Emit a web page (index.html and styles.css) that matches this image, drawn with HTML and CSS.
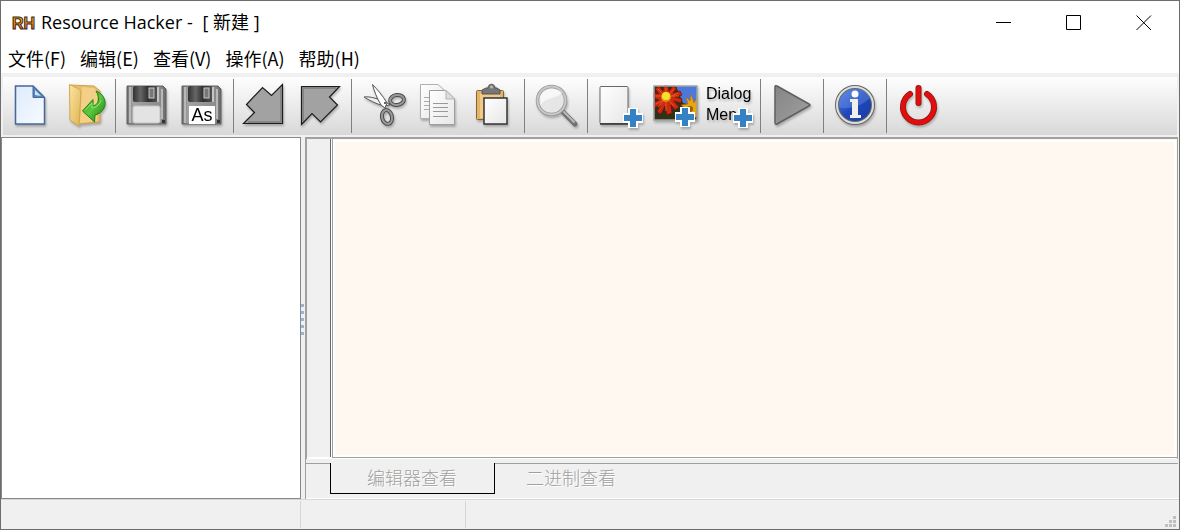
FILE: index.html
```html
<!DOCTYPE html>
<html lang="zh-CN">

<head>
    <meta charset="UTF-8">
    <meta name="viewport" content="width=device-width, initial-scale=1.0">
    <title>Resource Hacker</title>
    <link rel="stylesheet" href="styles.css">
</head>

<body>
    <!-- shared gradients and the blue plus badge -->
    <svg class="defs" width="0" height="0" aria-hidden="true">
        <defs>
            <linearGradient id="paper" x1="0" y1="0" x2="1" y2="1">
                <stop offset="0" stop-color="#ffffff"/><stop offset="1" stop-color="#e6e6e8"/>
            </linearGradient>
            <linearGradient id="bluePaper" x1="0" y1="0" x2="1" y2="1">
                <stop offset="0" stop-color="#dcebfc"/><stop offset="1" stop-color="#f8fbff"/>
            </linearGradient>
            <linearGradient id="metal" x1="0" y1="0" x2="1" y2="0">
                <stop offset="0" stop-color="#6f6f6f"/><stop offset=".15" stop-color="#a2a2a2"/>
                <stop offset=".85" stop-color="#8c8c8c"/><stop offset="1" stop-color="#666666"/>
            </linearGradient>
            <linearGradient id="dark" x1="0" y1="0" x2="1" y2="0">
                <stop offset="0" stop-color="#333333"/><stop offset=".3" stop-color="#666666"/>
                <stop offset=".6" stop-color="#303030"/><stop offset="1" stop-color="#555555"/>
            </linearGradient>
            <linearGradient id="folder" x1="0" y1="0" x2="1" y2="1">
                <stop offset="0" stop-color="#fbe6a4"/><stop offset="1" stop-color="#dfb350"/>
            </linearGradient>
            <linearGradient id="green" x1="0" y1="0" x2="1" y2="1">
                <stop offset="0" stop-color="#2f9c1d"/><stop offset=".5" stop-color="#5cc83e"/>
                <stop offset="1" stop-color="#14760d"/>
            </linearGradient>
            <linearGradient id="fire" x1="0" y1="0" x2="0" y2="1">
                <stop offset=".2" stop-color="#f5b800"/><stop offset="1" stop-color="#f0504a"/>
            </linearGradient>
            <linearGradient id="blueBall" x1="0" y1="0" x2="1" y2="1">
                <stop offset="0" stop-color="#5d8ce8"/><stop offset=".5" stop-color="#1f48bd"/>
                <stop offset="1" stop-color="#163a9e"/>
            </linearGradient>
            <linearGradient id="playFill" x1="0" y1="0" x2="1" y2="1">
                <stop offset="0" stop-color="#858585"/><stop offset="1" stop-color="#a0a0a0"/>
            </linearGradient>
            <g id="plus">
                <path d="M-5-10H5V-5H10V5H5V10H-5V5H-10V-5H-5Z" fill="#fff"/>
                <path d="M-3-9H3V-3H9V3H3V9H-3V3H-9V-3H-3Z" fill="#3481c4"/>
            </g>
            <g id="disk">
                <path d="M8 7H44L47 10V45H8Z" fill="url(#metal)" stroke="#606060"/>
                <path d="M11 8V44M43 10V40" stroke="#b8b8b8" stroke-width="2"/>
                <rect x="14" y="7" width="25" height="16" rx="2" fill="url(#dark)"/>
                <rect x="30" y="9" width="5" height="10" fill="#777" stroke="#c8c8c8"/>
                <path d="M39 8V23" stroke="#c4c4c4" stroke-width="2"/>
                <rect x="43" y="41" width="3" height="3" fill="#333"/>
            </g>
        </defs>
    </svg>

    <div class="window">
        <header class="titlebar">
            <svg class="logo" width="26" height="24" viewBox="0 0 26 24" aria-hidden="true">
                <text class="logo-text" x="1" y="18">RH</text>
            </svg>
            <h1>Resource Hacker - <span class="doc-name">[ 新建 ]</span></h1>
            <div class="window-controls">
                <button aria-label="Minimize"><svg width="16" height="16"><path d="M0 7.500H15"/></svg></button>
                <button aria-label="Maximize"><svg width="16" height="16"><path d="M.5.5H14.500V14.500H.5Z"/></svg></button>
                <button aria-label="Close"><svg width="16" height="16"><path d="M.5.5L15 15M15 .5L.5 15"/></svg></button>
            </div>
        </header>

        <nav class="menubar">
            <button>文件(F)</button>
            <button>编辑(E)</button>
            <button>查看(V)</button>
            <button>操作(A)</button>
            <button>帮助(H)</button>
        </nav>

        <div class="toolbar-frame">
            <div class="toolbar" role="toolbar">
                <div class="group">
                    <button aria-label="New">
                        <svg viewBox="0 0 55 54">
                            <path d="M12.500 7H30L41.500 18.500V45H12.500Z" fill="url(#bluePaper)" stroke="#48659c" stroke-width="1.500"/>
                            <path d="M30 7V18.500H41.500Z" fill="#4f86bd" stroke="#48659c"/>
                            <path d="M32 11V16L38 17Z" fill="#c8eafa"/>
                        </svg>
                    </button>
                    <button aria-label="Open">
                        <svg viewBox="0 0 55 54">
                            <path d="M12 6L36 7L42 12V43L21 45Z" fill="#e9bc69" stroke="#cfa14a"/>
                            <path d="M24 8L36 9L39 13V42L22 44Z" fill="#f3cf88"/>
                            <path d="M11.500 5.500L20 9.500L23 12L21 47L12 41Z" fill="url(#folder)" stroke="#d1a94c"/>
                            <path d="M38 12C46 15 49 23 46 29C44 33 41 35 37 36L36.500 43L24.500 32L35 20.500V27C40 26 43 20 38 12Z" fill="url(#green)" stroke="#208315"/>
                            <path d="M27 31.500L34 24V29C39 28 42 25 43 21" fill="none" stroke="#94e47b"/>
                        </svg>
                    </button>
                </div>
                <div class="group">
                    <button aria-label="Save">
                        <svg viewBox="0 0 55 54">
                            <use href="#disk"/>
                            <rect x="14" y="27" width="27" height="17" rx="2" fill="#e3e3e3" stroke="#c3c3c3"/>
                        </svg>
                    </button>
                    <button aria-label="Save As">
                        <svg viewBox="0 0 55 54">
                            <use href="#disk"/>
                            <rect x="15" y="27" width="26" height="18" fill="#fff"/>
                            <text class="as-text" x="28" y="42" text-anchor="middle">As</text>
                        </svg>
                    </button>
                </div>
                <div class="group">
                    <button aria-label="Import">
                        <svg viewBox="0 0 55 54">
                            <path d="M45.500 5.500V44.500H6.500L17.500 33.500L9.500 25.500L25.500 8.500L34.500 16.500Z" fill="#a2a2a2" stroke="#1c1c1c" stroke-width="1.200"/>
                            <path d="M44 9V43H11" fill="none" stroke="#858585" stroke-width="2"/>
                        </svg>
                    </button>
                    <button aria-label="Export">
                        <svg viewBox="0 0 55 54">
                            <path d="M9.500 7.500H47.500L37.500 18L45.500 26L28.500 43L20 34.500L9.500 45.500Z" fill="#a2a2a2" stroke="#1c1c1c" stroke-width="1.200"/>
                            <path d="M11 42V9H44" fill="none" stroke="#858585" stroke-width="2"/>
                        </svg>
                    </button>
                </div>
                <div class="group">
                    <button aria-label="Cut">
                        <svg viewBox="0 0 55 54">
                            <path d="M9 18C15 17 23 20 31 23L35 26L29 27C21 25 14 21 9 18Z" fill="#eee" stroke="#555"/>
                            <path d="M17.500 5.500C22 10 28 17 32 24L30 29L26 26C22 19 19 12 17.500 5.500Z" fill="#fff" stroke="#555"/>
                            <ellipse cx="42" cy="21" rx="7" ry="5" fill="none" stroke="#4c4c4c" stroke-width="4" transform="rotate(-8 42 21)"/>
                            <ellipse cx="42" cy="21" rx="7" ry="5" fill="none" stroke="#999" stroke-width="2" transform="rotate(-8 42 21)"/>
                            <ellipse cx="32" cy="38" rx="5" ry="7" fill="none" stroke="#4c4c4c" stroke-width="4" transform="rotate(-12 32 38)"/>
                            <ellipse cx="32" cy="38" rx="5" ry="7" fill="none" stroke="#999" stroke-width="2" transform="rotate(-12 32 38)"/>
                            <circle cx="30" cy="24" r="1" fill="#333"/>
                        </svg>
                    </button>
                    <button aria-label="Copy">
                        <svg viewBox="0 0 55 54">
                            <path d="M10.500 5.500H28L35 12V39.500H10.500Z" fill="url(#paper)" stroke="#b0b0b0"/>
                            <path d="M14 18.500H19M14 22.500H19M14 26.500H19M14 30.500H19" stroke="#aaa"/>
                            <path d="M19.500 11.500H36L44.500 20V45.500H19.500Z" fill="url(#paper)" stroke="#9e9e9e"/>
                            <path d="M36 11.500V20H44.500Z" fill="#ddd" stroke="#b5b5b5"/>
                            <path d="M23 24.500H38M23 28.500H38M23 32.500H38M23 37.500H38" stroke="#999"/>
                        </svg>
                    </button>
                    <button aria-label="Paste">
                        <svg viewBox="0 0 55 54">
                            <rect x="11.500" y="11.500" width="27" height="29" rx="1" fill="#e2b56b" stroke="#86642d"/>
                            <rect x="15" y="14" width="20" height="25" fill="#f2c987"/>
                            <path d="M17 15V11L21 9H23C23 4 30 4 30 9H32L35 11V15Z" fill="#777" stroke="#555"/>
                            <circle cx="26.500" cy="8" r="1.500" fill="#bbb"/>
                            <rect x="19" y="19" width="23" height="26" fill="url(#paper)" stroke="#333" stroke-width="1.500"/>
                        </svg>
                    </button>
                </div>
                <div class="group">
                    <button aria-label="Find">
                        <svg viewBox="0 0 55 54">
                            <path d="M34 32L47 45" stroke="#717171" stroke-width="5" stroke-linecap="round"/>
                            <path d="M36 33L46 43" stroke="#bababa" stroke-width="2" stroke-linecap="round"/>
                            <circle cx="23.500" cy="21.500" r="14" fill="#ededed" fill-opacity=".85" stroke="#979797" stroke-width="3.500"/>
                            <circle cx="23.500" cy="21.500" r="14" fill="none" stroke="#c9c9c9" stroke-width="2"/>
                            <path d="M13 26C17 18 26 21 34 14C30 8 15 8 12 18Z" fill="#fafafa" opacity=".8"/>
                        </svg>
                    </button>
                </div>
                <div class="group">
                    <button aria-label="Add Resource">
                        <svg viewBox="0 0 55 54">
                            <rect x="9" y="7.500" width="28" height="37" rx="1" fill="url(#paper)" stroke="#686868"/>
                            <path d="M9 45H37" stroke="#333" stroke-width="1.500"/>
                            <use href="#plus" x="42" y="39"/>
                        </svg>
                    </button>
                    <button aria-label="Add Image">
                        <svg viewBox="0 0 55 54">
                            <rect x="8" y="7" width="43" height="34" fill="#2c3318"/>
                            <path d="M30 7H51V28L37 24Z" fill="#4c78db"/>
                            <g fill="#eba50c" stroke="#a86a08" stroke-width=".5">
                                <path d="M45 15L48 24L51 19V38L40 41L36 34L40 30L35 26L42 25L40 18L44 22Z"/>
                            </g>
                            <circle cx="44" cy="30" r="3" fill="#96610c"/>
                            <g fill="#c92a10" stroke="#7d0f06" stroke-width=".8">
                                <path d="M18 7H22L23 12L27 7L31 9L27 14L34 12L36 16L29 18L36 20L35 24L28 22L33 28L29 31L25 26L26 34L21 36L19 27L15 35L11 33L14 26L8 29V23L13 21L8 19V14L13 15L9 10L13 7L17 12Z"/>
                            </g>
                            <path d="M20 9V32M10 17H33M12 10L28 27M28 10L12 28M10 25L32 14" stroke="#ec5426" stroke-width="1"/>
                            <circle cx="20" cy="18" r="5" fill="#e08e12"/>
                            <circle cx="20" cy="17" r="4" fill="#f4e22c"/>
                            <rect x="8" y="7" width="43" height="34" fill="none" stroke="#a2a2a2" stroke-width="1.500"/>
                            <use href="#plus" x="39" y="38"/>
                        </svg>
                    </button>
                    <button aria-label="Add Dialog or Menu">
                        <svg viewBox="0 0 55 54">
                            <text class="dialog-text" x="5" y="20">Dialog</text>
                            <text class="dialog-text" x="5" y="41">Menu</text>
                            <use href="#plus" x="42" y="39"/>
                        </svg>
                    </button>
                </div>
                <div class="group">
                    <button aria-label="Compile">
                        <svg viewBox="0 0 55 54">
                            <path d="M11 8Q11 6 13 7L45 25Q47 26 45 27L13 45Q11 46 11 43Z" fill="url(#playFill)" stroke="#606060" stroke-width="1.500"/>
                        </svg>
                    </button>
                </div>
                <div class="group">
                    <button aria-label="About">
                        <svg viewBox="0 0 55 54">
                            <circle cx="28" cy="26" r="18" fill="url(#blueBall)" stroke="#666" stroke-width="4"/>
                            <circle cx="28" cy="26" r="18" fill="none" stroke="#ddd" stroke-width="2"/>
                            <path d="M12 28C18 31 34 28 43 19C38 6 15 6 12 24Z" fill="#6b95eb" opacity=".4"/>
                            <circle cx="28" cy="15" r="3.500" fill="#fff"/>
                            <path d="M23 20H31V36H34V39H23V36H25V23H23Z" fill="#f0efea"/>
                        </svg>
                    </button>
                </div>
                <div class="group">
                    <button aria-label="Exit">
                        <svg viewBox="0 0 55 54">
                            <g fill="none" stroke-linecap="round">
                                <path d="M20 15A15.500 15.500 0 1 0 37 15M28.500 9V24" stroke="#8d1512" stroke-width="6"/>
                                <path d="M20 15A15.500 15.500 0 1 0 37 15M28.500 9V24" stroke="#e20d0d" stroke-width="4.500"/>
                            </g>
                        </svg>
                    </button>
                </div>
            </div>
        </div>

        <main class="workspace">
            <div class="tree" role="tree"></div>
            <div class="splitter" role="separator">
                <span></span><span></span><span></span><span></span><span></span>
            </div>
            <section class="pane">
                <div class="editor">
                    <div class="gutter"></div>
                    <textarea aria-label="编辑器" spellcheck="false"></textarea>
                </div>
                <div class="tabs">
                    <div class="tab-lead"></div>
                    <button class="tab active" disabled>编辑器查看</button>
                    <button class="tab" disabled>二进制查看</button>
                    <div class="tab-rest"></div>
                </div>
            </section>
        </main>

        <footer class="statusbar">
            <div class="status-first"></div>
            <div class="status-second"></div>
            <svg class="grip" width="12" height="12" aria-hidden="true">
                <path d="M8 0h3v3h-3zM4 4h3v3h-3zM8 4h3v3h-3zM0 8h3v3h-3zM4 8h3v3h-3zM8 8h3v3h-3z"/>
            </svg>
        </footer>
    </div>
</body>

</html>
```
FILE: styles.css
```css
* {
    box-sizing: border-box;
}

body {
    margin: 0;
    font-family: "Open Sans", "Noto Sans CJK SC", sans-serif;
    font-size: 18px;
    color: #000;
}

button {
    margin: 0;
    padding: 0;
    border: 0;
    background: none;
    font: inherit;
    color: inherit;
}

.defs {
    position: absolute;
}

.window {
    display: flex;
    flex-direction: column;
    height: 100vh;
    border: 1px solid #6d6d6d;
    background-color: #f0f0f0;
}

/* title bar */
.titlebar {
    display: flex;
    align-items: center;
    height: 44px;
    padding-left: 10px;
    background-color: #fff;
}

.logo-text {
    font-family: "Liberation Sans", sans-serif;
    font-size: 16px;
    font-weight: bold;
    fill: url(#fire);
    stroke: #3a1c14;
    stroke-width: 1px;
}

h1 {
    margin: 0 auto 2px 4px;
    font-size: 18px;
    font-weight: normal;
    line-height: 24px;
}

.doc-name {
    margin-left: 5px;
}

.window-controls {
    display: flex;
    height: 100%;
}

.window-controls button {
    display: flex;
    align-items: center;
    justify-content: center;
    width: 70px;
}

.window-controls path {
    fill: none;
    stroke: #000;
}

/* menu */
.menubar {
    display: flex;
    gap: 14px;
    height: 28px;
    padding-left: 7px;
    background-color: #fff;
}

.menubar button {
    padding-bottom: 2px;
    line-height: 26px;
    font-family: "Noto Sans CJK SC", sans-serif;
}

/* toolbar */
.toolbar-frame {
    padding: 4px 2px 2px;
}

.toolbar {
    display: flex;
    padding: 2px 0;
    background: linear-gradient(#fefefe, #d8d8d8);
}

.group {
    display: flex;
    height: 54px;
    padding: 0 4px 0 3px;
    border-right: 1px solid #808080;
}

.group:first-child {
    padding: 0 2px 0 0;
}

.group:last-child {
    border-right: 0;
}

.group button {
    width: 55px;
    height: 54px;
}

.group svg {
    display: block;
    filter: drop-shadow(1px 2px 1px rgba(0, 0, 0, 0.25));
}

.as-text {
    font-family: "Liberation Sans", sans-serif;
    font-size: 18px;
}

.dialog-text {
    font-family: "Liberation Sans", sans-serif;
    font-size: 16px;
}

/* tree, splitter, editor */
.workspace {
    display: flex;
    flex: 1;
    min-height: 0;
}

.tree {
    width: 300px;
    border: 1px solid #828790;
    background-color: #fff;
}

.splitter {
    display: flex;
    flex-direction: column;
    align-items: flex-start;
    justify-content: center;
    gap: 4px;
    width: 4px;
    padding-top: 3px;
}

.splitter span {
    width: 3px;
    height: 3px;
    background-color: #99b4d1;
}

.pane {
    display: flex;
    flex: 1;
    flex-direction: column;
    margin-right: 1px;
    border-left: 1px solid #a0a0a0;
}

.editor {
    display: flex;
    flex: 1;
    border: 1px solid #a0a0a0;
    border-width: 2px 1px 0 1px;
    background-color: #fff;
}

.gutter {
    width: 24px;
    margin: 0 1px 2px 0;
    border-right: 1px solid #696969;
    background-color: #f0f0f0;
}

textarea {
    flex: 1;
    min-width: 0;
    margin-bottom: 1px;
    padding: 0;
    border: 1px solid #a0a0a0;
    border-width: 0 0 1px 1px;
    outline: 2px solid #fff;
    outline-offset: -3px;
    background-color: #fff8f0;
    resize: none;
}

/* bottom tabs */
.tabs {
    display: flex;
    height: 40px;
    padding-top: 4px;
    border-bottom: 1px solid #fff;
}

.tab-lead {
    width: 24px;
    border-top: 1px solid #a0a0a0;
}

.tab {
    height: 31px;
    padding: 0 31px 5px;
    border-top: 1px solid #a0a0a0;
    font-family: "Noto Sans CJK SC", sans-serif;
    font-weight: 300;
    line-height: 24px;
    color: #a0a0a0;
    text-shadow: 1px 1px #fff;
}

.tab.active {
    padding: 0 37px 3px 36px;
    border: 1px solid #000;
    border-top: 0;
}

.tab-rest {
    flex: 1;
    border-top: 1px solid #a0a0a0;
}

/* status bar */
.statusbar {
    display: flex;
    height: 30px;
    padding: 1px 2px 1px 0;
    border-top: 1px solid #d7d7d7;
}

.status-first {
    width: 300px;
    border-right: 1px solid #d7d7d7;
}

.status-second {
    width: 165px;
    border-right: 1px solid #d7d7d7;
}

.grip {
    align-self: flex-end;
    margin-left: auto;
    fill: #bfbfbf;
}
```
